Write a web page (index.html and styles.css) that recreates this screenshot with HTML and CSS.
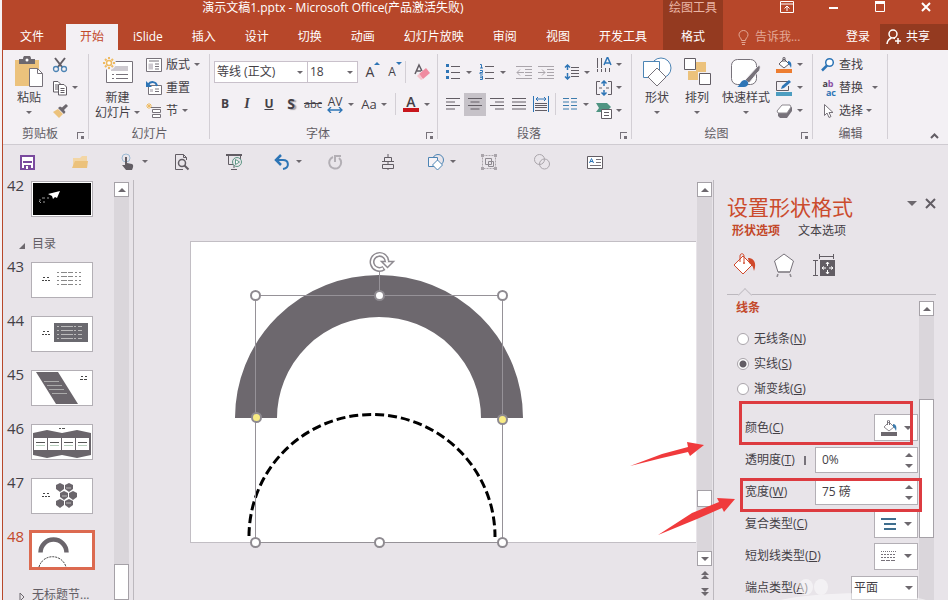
FILE: index.html
```
<!DOCTYPE html>
<html lang="zh-CN">
<head>
    <meta charset="UTF-8">
    <meta name="viewport" content="width=device-width, initial-scale=1.0">
    <title>演示文稿1.pptx</title>
    <link rel="stylesheet" href="styles.css">
</head>
<body>
<div class="app">
    <header class="header">
        <div class="title">演示文稿1.pptx - Microsoft Office(产品激活失败)</div>
        <div class="context-title">绘图工具</div>
        <div class="window-buttons">
            <button aria-label="功能区显示选项"><svg width="14" height="12" viewBox="0 0 14 12"><path d="M.5.5h13v11H.5zM.5 3h13M7 10V5M4.500 7.500 7 5l2.500 2.500" fill="none" stroke="#fff"/></svg></button>
            <button aria-label="最小化"><svg width="12" height="12" viewBox="0 0 12 12"><path d="M1 7h9" stroke="#fff" stroke-width="2"/></svg></button>
            <button aria-label="最大化"><svg width="12" height="12" viewBox="0 0 12 12"><path d="M1 1.500h10" stroke="#fff" stroke-width="3"/><path d="M1.500 1v9.500h9V1" fill="none" stroke="#fff"/></svg></button>
            <button aria-label="关闭"><svg width="12" height="12" viewBox="0 0 12 12"><path d="m2 2 8 8m0-8-8 8" stroke="#fff" stroke-width="2"/></svg></button>
        </div>
        <nav class="tabs">
            <button class="tab file">文件</button>
            <button class="tab active">开始</button>
            <button class="tab">iSlide</button>
            <button class="tab">插入</button>
            <button class="tab">设计</button>
            <button class="tab">切换</button>
            <button class="tab">动画</button>
            <button class="tab">幻灯片放映</button>
            <button class="tab">审阅</button>
            <button class="tab">视图</button>
            <button class="tab">开发工具</button>
        </nav>
        <button class="context-tab">格式</button>
        <div class="account">
            <button class="tell-me"><svg width="11" height="15" viewBox="0 0 11 15"><path d="M3.500 10.500C3.500 8 1 7.500 1 4.800a4.500 4.300 0 0 1 9 0c0 2.700-2.500 3.200-2.500 5.700zM3.500 12.500h4M4 14.500h3" fill="none" stroke="#e3a896"/></svg>告诉我...</button>
            <button class="login">登录</button>
            <button class="share"><svg width="16" height="16" viewBox="0 0 16 16"><circle cx="7" cy="5" r="4" fill="none" stroke="#fff" stroke-width="1.500"/><path d="M1 15c.3-3 2-5 4.500-6M9 9.500 7.500 9M12 9v6M9 12h6" fill="none" stroke="#fff" stroke-width="1.500"/></svg>共享</button>
        </div>
    </header>

    <section class="ribbon">
        <div class="group clipboard">
            <div class="group-body">
                <button class="big">
                    <svg width="30" height="32" viewBox="0 0 30 32"><path d="M1 4h24v26H1z" fill="#ecc27c"/><path d="M5 3h4a4 4 0 0 1 8 0h4v5H5z" fill="#6d686e"/><circle cx="13" cy="4" r="1.500" fill="#fff"/><path d="M15.500 12.500h8l5 5v13h-13z" fill="#fff" stroke="#77727a"/><path d="M23.500 12.500v5h5" fill="none" stroke="#77727a"/></svg>
                    <span>粘贴</span><i class="caret"></i>
                </button>
                <div class="stack">
                    <button aria-label="剪切"><svg width="16" height="16" viewBox="0 0 16 16"><path d="m3 1 7.500 9.500M13 1 5.500 10.500" stroke="#625d64" stroke-width="2" fill="none"/><circle cx="4" cy="12" r="2.500" fill="none" stroke="#4c84b4" stroke-width="1.300"/><circle cx="12" cy="12" r="2.500" fill="none" stroke="#4c84b4" stroke-width="1.300"/></svg></button>
                    <button aria-label="复制"><svg width="16" height="16" viewBox="0 0 16 16"><path d="M1.500 1.500H6L8.500 4v8h-7zM3 5h3M3 7h3M3 9h3" fill="#fff" stroke="#625d64"/><path d="M6.500 4.500H12L14.500 7v8h-8zM8.500 8.500h4M8.500 10.500h4M8.500 12.500h4" fill="#fff" stroke="#625d64"/></svg><i class="caret"></i></button>
                    <button aria-label="格式刷"><svg width="16" height="16" viewBox="0 0 16 16"><path d="m1 9 5-3 5 5-4 4z" fill="#ecc27c"/><path d="m6 5 6 6 1.500-2L12 7l4-4-2-2-4 3.500L8 3.500z" fill="#6d686e"/></svg></button>
                </div>
            </div>
            <footer><span>剪贴板</span><button class="launcher" aria-label="剪贴板选项"></button></footer>
        </div>

        <div class="group slides">
            <div class="group-body">
                <button class="big">
                    <svg width="30" height="32" viewBox="0 0 30 32"><path d="M3.500 5.500h26v21h-26z" fill="#fff" stroke="#77727a"/><path d="M8 10h17v5H8z" fill="#cdc9cf"/><path d="M9 18.500h2m2 0h12M9 22.500h2m2 0h12" stroke="#77727a"/><circle cx="6" cy="7" r="7" fill="#f3f0f4"/><circle cx="6" cy="7" r="2.500" fill="#fff" stroke="#eebb62" stroke-width="1.500"/><path d="M6 1v2m0 8v2M0 7h2m8 0h2M2 3l1.500 1.500m5 5L10 11m0-8L8.500 4.500m-5 5L2 11" stroke="#eebb62" stroke-width="2"/></svg>
                    <span>新建</span><span class="inline">幻灯片<i class="caret"></i></span>
                </button>
                <div class="stack">
                    <button><svg width="16" height="16" viewBox="0 0 16 16"><path d="M.5 1.500h15v13H.5zM3 4h10M9 7h4M9 9.500h4M9 12h4" fill="#fff" stroke="#77727a"/><path d="M2.500 6.500h4.500v6H2.500z" fill="#cdc9cf"/></svg>版式<i class="caret"></i></button>
                    <button><svg width="16" height="16" viewBox="0 0 16 16"><path d="M2.500 5.500h13v9h-13zM9 9h4M9 11.500h4" fill="#fff" stroke="#77727a"/><path d="M4 9h3v3H4z" fill="#cdc9cf"/><path d="M2 5c2.500-4 8-4 9 1" fill="none" stroke="#2e75b6" stroke-width="2"/><path d="M0 1v6h6z" fill="#2e75b6"/></svg>重置</button>
                    <button><svg width="16" height="16" viewBox="0 0 16 16"><path d="M5 4.500h10M6.500 6.500h8v3h-8zM6.500 11.500h8v3h-8z" fill="#fff" stroke="#77727a"/><path d="M3 0v6M0 3h6M1 1l4 4M5 1 1 5" stroke="#eebb62"/></svg>节<i class="caret"></i></button>
                </div>
            </div>
            <footer><span>幻灯片</span></footer>
        </div>

        <div class="group font">
            <div class="group-body rows">
                <div class="row">
                    <span class="combo name"><select aria-label="字体"><option>等线 (正文)</option></select><i class="caret"></i></span>
                    <span class="combo size"><select aria-label="字号"><option>18</option></select><i class="caret"></i></span>
                    <button class="tool grow" aria-label="增大字号">A<svg width="6" height="14" viewBox="0 0 6 14"><path d="m0 4 3-3 3 3z" fill="#2e75b6"/></svg></button>
                    <button class="tool shrink" aria-label="减小字号">A<svg width="6" height="14" viewBox="0 0 6 14"><path d="m0 1 3 3 3-3z" fill="#2e75b6"/></svg></button>
                    <i class="divider"></i>
                    <button class="tool eraser" aria-label="清除格式"><svg width="16" height="18" viewBox="0 0 16 18"><path d="M1 11 5 2l3 6M3 8h4" fill="none" stroke="#625d64" stroke-width="1.500"/><path d="m5 11 7-6 4 5-7 6z" fill="#f08ba0"/><path d="m3 13 2-2 4 5-2 1z" fill="#f7c3cc"/></svg></button>
                </div>
                <div class="row">
                    <button class="tool bold">B</button>
                    <button class="tool italic">I</button>
                    <button class="tool underline">U</button>
                    <button class="tool shadow">S</button>
                    <button class="tool strike">abc</button>
                    <button class="tool spacing" aria-label="字符间距"><span>AV</span><svg width="16" height="6" viewBox="0 0 16 6"><path d="M1 3h14M4 0 1 3l3 3M12 0l3 3-3 3" fill="none" stroke="#2e75b6" stroke-width="1.300"/></svg></button>
                    <i class="caret"></i>
                    <button class="tool case">Aa</button>
                    <i class="caret"></i>
                    <i class="divider"></i>
                    <button class="tool color">A</button>
                    <i class="caret"></i>
                </div>
            </div>
            <footer><span>字体</span><button class="launcher" aria-label="字体选项"></button></footer>
        </div>

        <div class="group paragraph">
            <div class="group-body">
                <div class="rows">
                    <div class="row">
                        <button class="tool" aria-label="项目符号"><svg width="16" height="16" viewBox="0 0 16 16"><path d="M1 0h3v3H1zM1 6h3v3H1zM1 12h3v3H1z" fill="#2e75b6"/><path d="M6 2.500h9M6 8.500h9M6 14.500h9" stroke="#625d64"/></svg></button><i class="caret"></i>
                        <button class="tool wide" aria-label="编号"><svg width="16" height="16" viewBox="0 0 16 16"><path d="M1 .5h1.500V4M1 4h3M1 6.500h2.500v2H1V10h3M1 12h2.500v3.500H1M1 13.700h2" fill="none" stroke="#2e75b6"/><path d="M6 2.500h9M6 8.500h9M6 14.500h9" stroke="#625d64"/></svg></button><i class="caret"></i>
                        <button class="tool first" aria-label="减少缩进"><svg width="17" height="14" viewBox="0 0 17 14"><path d="M0 1.500h16M9 4.500h7M9 7.500h7M9 10.500h7M0 13.500h16M1 7.500h7M4 4.500l-3 3 3 3" fill="none" stroke="#aaa5ab"/></svg></button>
                        <button class="tool" aria-label="增加缩进"><svg width="17" height="14" viewBox="0 0 17 14"><path d="M0 1.500h16M9 4.500h7M9 7.500h7M9 10.500h7M0 13.500h16M0 7.500h7M4 4.500l3 3-3 3" fill="none" stroke="#aaa5ab"/></svg></button>
                        <button class="tool line" aria-label="行距"><svg width="15" height="16" viewBox="0 0 15 16"><path d="M3.500 1v5M3.500 9v6M1 3.500 3.500 1 6 3.500M1 12.500 3.500 15 6 12.500" fill="none" stroke="#2e75b6" stroke-width="1.500"/><path d="M7 3.500h8M7 6.500h8M7 9.500h8M7 12.500h8" stroke="#625d64"/></svg></button><i class="caret"></i>
                    </div>
                    <div class="row">
                        <button class="tool" aria-label="左对齐"><svg width="14" height="12" viewBox="0 0 14 12"><path d="M0 .5h14M0 4h9M0 7.500h14M0 11h9" stroke="#625d64"/></svg></button>
                        <button class="tool on" aria-label="居中"><svg width="14" height="12" viewBox="0 0 14 12"><path d="M0 .5h14M2.500 4h9M0 7.500h14M2.500 11h9" stroke="#625d64"/></svg></button>
                        <button class="tool" aria-label="右对齐"><svg width="14" height="12" viewBox="0 0 14 12"><path d="M0 .5h14M5 4h9M0 7.500h14M5 11h9" stroke="#625d64"/></svg></button>
                        <button class="tool" aria-label="两端对齐"><svg width="14" height="12" viewBox="0 0 14 12"><path d="M0 .5h14M0 4h14M0 7.500h14M0 11h14" stroke="#625d64"/></svg></button>
                        <button class="tool" aria-label="分散对齐"><svg width="16" height="16" viewBox="0 0 16 16"><path d="M.5 0v16M15.500 0v16M3 3h10M5 1 3 3l2 2M11 1l2 2-2 2" fill="none" stroke="#2e75b6"/><path d="M2 7.500h12M2 9.500h12M2 11.500h12M2 14.500h12" stroke="#625d64"/></svg></button>
                        <i class="divider"></i>
                        <button class="tool" aria-label="分栏"><svg width="14" height="12" viewBox="0 0 14 12"><path d="M0 .5h6M8 .5h6M0 4h6M8 4h6M0 7.500h6M8 7.500h6M0 11h6M8 11h6" stroke="#3d7cad"/></svg></button><i class="caret"></i>
                    </div>
                </div>
                <div class="stack">
                    <button aria-label="文字方向"><svg width="16" height="16" viewBox="0 0 16 16"><path d="M1.500 1v14M5.500 1v14M9.500 11v4M13.500 11v4" stroke="#625d64" stroke-dasharray="10 1"/><path d="m8 8 3.500-8L15 8M9 6h5" fill="none" stroke="#2e75b6" stroke-width="1.500"/></svg><i class="caret"></i></button>
                    <button aria-label="对齐文本"><svg width="16" height="16" viewBox="0 0 16 16"><path d="M4 1.500H.5v13H4M12 1.500h3.500v13H12M3 8h3m4 0h3" fill="none" stroke="#625d64"/><path d="M8 1v5M8 10v5M5.500 3.500 8 1l2.500 2.500M5.500 12.500 8 15l2.500-2.500" fill="none" stroke="#2e75b6" stroke-width="1.500"/></svg><i class="caret"></i></button>
                    <button aria-label="转换为 SmartArt"><svg width="16" height="16" viewBox="0 0 16 16"><path d="M0 0h11l4 4-3 3H6v2H0l3-4z" fill="#4f9482"/><path d="M5.500 6.500h10v9h-10zM8 9.500h5M8 12.500h5" fill="#fff" stroke="#625d64"/></svg><i class="caret"></i></button>
                </div>
            </div>
            <footer><span>段落</span><button class="launcher" aria-label="段落选项"></button></footer>
        </div>

        <div class="group drawing">
            <div class="group-body">
                <button class="big">
                    <svg width="30" height="32" viewBox="0 0 30 32"><circle cx="19" cy="12" r="10" fill="#fff" stroke="#4c84b4"/><path d="M1.500 5.500h16v16h-16z" fill="#fff" stroke="#4c84b4"/><path d="m15 12 9 9-9 9-9-9z" fill="#fff" stroke="#77727a"/></svg>
                    <span>形状</span><i class="caret"></i>
                </button>
                <button class="big arrange">
                    <svg width="30" height="32" viewBox="0 0 30 32"><path d="M14 6h10v10H14zM6 15h10v9H6z" fill="#ecc27c"/><path d="M2.500 2.500h11v11h-11zM17.500 17.500h11v11h-11z" fill="#fff" stroke="#625d64"/></svg>
                    <span>排列</span><i class="caret"></i>
                </button>
                <button class="big">
                    <svg width="30" height="32" viewBox="0 0 30 32"><rect x=".5" y="3.500" width="25" height="25" rx="6" fill="#fff" stroke="#77727a"/><path d="m14 24 13-14c3-2 3 4 0 6l-9 11z" fill="#77727a" stroke="#f3f0f4"/><path d="M6 31c3-1 3-7 8-7 5 1 4 7-1 7z" fill="#2e75b6"/></svg>
                    <span>快速样式</span><i class="caret"></i>
                </button>
                <div class="stack">
                    <button aria-label="形状填充"><svg width="16" height="16" viewBox="0 0 16 16"><path d="m8 2 5 5-5 4-5-4z" fill="#fff" stroke="#625d64"/><path d="M7 5V1c0-1 2-1 2 0v4" fill="none" stroke="#625d64"/><path d="M12 4c3 0 4 3 3 7-1-2-1-3-3-4z" fill="#2e75b6"/><path d="M0 12h16v4H0z" fill="#ed7d31"/></svg><i class="caret"></i></button>
                    <button aria-label="形状轮廓"><svg width="16" height="16" viewBox="0 0 16 16"><path d="M12 1.500H.5v9h12V6" fill="none" stroke="#625d64"/><path d="m5 9 1-3 7-6 2 2-7 6z" fill="#2e75b6"/><path d="M0 12h16v4H0z" fill="#4d9dc0"/></svg><i class="caret"></i></button>
                    <button aria-label="形状效果"><svg width="16" height="16" viewBox="0 0 16 16"><path d="M2 9v4l2 2h7l5-7V4z" fill="#77727a"/><path d="M6 2h8l1 2-4 6H2L1 8z" fill="#fff" stroke="#8e8a90"/></svg><i class="caret"></i></button>
                </div>
            </div>
            <footer><span>绘图</span><button class="launcher" aria-label="绘图选项"></button></footer>
        </div>

        <div class="group editing">
            <div class="group-body">
                <div class="stack">
                    <button><svg width="16" height="16" viewBox="0 0 16 16"><circle cx="9.500" cy="5.500" r="3.800" fill="#fff" stroke="#2e75b6" stroke-width="1.500"/><path d="M7 8.500 2 13.500" stroke="#2e75b6" stroke-width="2.500"/></svg>查找</button>
                    <button class="replace"><span class="swap"><b>a<em>b</em></b><b>ac</b></span>替换<i class="caret"></i></button>
                    <button><svg width="16" height="16" viewBox="0 0 16 16"><path d="M4.500 1.500v11L7 10l2 4.500 2-1L9 9.500h4z" fill="#fff" stroke="#77727a"/></svg>选择<i class="caret"></i></button>
                </div>
            </div>
            <footer><span>编辑</span></footer>
        </div>
        <button class="collapse" aria-label="折叠功能区"><svg width="9" height="6" viewBox="0 0 9 6"><path d="m1 5 3.500-3.500L8 5" fill="none" stroke="#625d64" stroke-width="2"/></svg></button>
    </section>

    <div class="quick">
        <button aria-label="保存"><svg width="18" height="18" viewBox="0 0 18 18"><path d="M3 3h13v13H3z" fill="#fff" stroke="#7a4a9e" stroke-width="2"/><path d="M5 9h9" stroke="#7a4a9e" stroke-width="2"/><path d="M6 12h7v4H6z" fill="#7a4a9e"/><path d="M8 13h2v3H8z" fill="#fff"/></svg></button>
        <button aria-label="打开"><svg width="18" height="18" viewBox="0 0 18 18"><path d="M2 15V5h7l2-2h5v12z" fill="#f3d6a5"/><path d="m1 15 3-7h13l-1 7z" fill="#ecc27c"/></svg></button>
        <button class="split" aria-label="触摸模式"><svg width="18" height="18" viewBox="0 0 18 18"><circle cx="7" cy="5" r="4" fill="none" stroke="#9cbad4"/><path d="M6 4h2v6l5 1c2 1 1 4 0 6H7l-4-5h3z" fill="#625d64"/></svg><i class="caret"></i></button>
        <button aria-label="打印预览"><svg width="18" height="18" viewBox="0 0 18 18"><path d="M11 16.500H3.500v-15h8l3 3V7M11.500 1.500v3h3" fill="none" stroke="#625d64"/><circle cx="10" cy="10" r="3.500" fill="none" stroke="#625d64" stroke-width="1.500"/><path d="m12.500 12.500 4 4" stroke="#625d64" stroke-width="2"/></svg></button>
        <button aria-label="从头开始"><svg width="18" height="18" viewBox="0 0 18 18"><path d="M1 2h16" stroke="#625d64" stroke-width="2"/><path d="M3.500 3v8.500H8M15.500 3v3M9 12v3M6 16.500h6" fill="none" stroke="#625d64"/><circle cx="12" cy="9" r="4.500" fill="#e9e5ea" stroke="#5e9785"/><path d="m10.500 6.500 4 2.500-4 2.500z" fill="#fff" stroke="#5e9785"/></svg></button>
        <button class="split" aria-label="撤消"><svg width="18" height="18" viewBox="0 0 18 18"><path d="M3 7h7c6 0 7 8 0 9" fill="none" stroke="#2e75b6" stroke-width="2"/><path d="M8 2 3 7l5 5" fill="none" stroke="#2e75b6" stroke-width="2.500"/></svg><i class="caret"></i></button>
        <button aria-label="重复"><svg width="18" height="18" viewBox="0 0 18 18"><path d="M7 4a6 6 0 1 0 6 1" fill="none" stroke="#b3afb5" stroke-width="2"/><path d="M9 9V3h6" fill="none" stroke="#b3afb5" stroke-width="2"/></svg></button>
        <button aria-label="对齐"><svg width="18" height="18" viewBox="0 0 18 18"><path d="M9 1v3M5.500 4.500h7v4h-7zM9 8.500v3M3.500 11.500h11v4h-11zM9 15v2M3 8.500h12" fill="none" stroke="#625d64"/></svg></button>
        <button class="split" aria-label="形状"><svg width="18" height="18" viewBox="0 0 18 18"><circle cx="11" cy="7" r="5.500" fill="none" stroke="#4c84b4"/><path d="M1.500 4.500h9v9h-9z" fill="#f6f3f7" stroke="#4c84b4"/><path d="m10.500 7 5 5-5 5-5-5z" fill="#fff" stroke="#4c84b4"/></svg><i class="caret"></i></button>
        <button aria-label="组合"><svg width="18" height="18" viewBox="0 0 18 18"><path d="M2.500 2.500h13v13h-13z" fill="none" stroke="#aaa5ab" stroke-dasharray="2 1"/><path d="M5.500 5.500h6v6h-6zM8.500 8.500h5v5h-5z" fill="none" stroke="#8e8a90"/><path d="M1 1h3v3H1zM14 1h3v3h-3zM1 14h3v3H1zM14 14h3v3h-3z" fill="#aaa5ab"/></svg></button>
        <button aria-label="合并形状"><svg width="18" height="18" viewBox="0 0 18 18"><circle cx="6.500" cy="6.500" r="5" fill="none" stroke="#aaa5ab"/><circle cx="11.500" cy="11" r="5" fill="none" stroke="#aaa5ab"/></svg></button>
        <button aria-label="文本框"><svg width="18" height="18" viewBox="0 0 18 18"><path d="M1.500 3.500h15v12h-15z" fill="#fff" stroke="#625d64"/><path d="m3.500 10 2-4.500 2 4.500M4 8.500h3" fill="none" stroke="#2e75b6"/><path d="M10 6.500h5M10 9.500h5M4 12.500h11" stroke="#77727a"/></svg></button>
    </div>

    <main class="workspace">
        <aside class="thumbs">
            <ol>
                <li><span>42</span><svg class="thumb" viewBox="0 0 60 34"><path d="M1 1h58v32H1z"/><path d="m28 9-12 3 4 2 1 3 2-2 2 1z" fill="#fff"/><path d="M7 18h2m1-2h3m-2 4h2m-6-1 2 2m8-5h-2" stroke="#999"/></svg></li>
                <li class="section"><svg width="8" height="8" viewBox="0 0 8 8"><path d="M7 1v6H1z" fill="#6d686e"/></svg>目录</li>
                <li><span>43</span><svg class="thumb" viewBox="0 0 60 34"><path d="M0 0h60v34H0z" fill="#fff"/><path d="M11 14.500h2m2 0h2M10 17.500h8" stroke="#444" stroke-dasharray="2 1"/><path d="M25 9.500h24M25 13.500h24M25 17.500h24M25 21.500h24" stroke="#888" stroke-dasharray="2 2 6 1 5 2"/></svg></li>
                <li><span>44</span><svg class="thumb" viewBox="0 0 60 34"><path d="M0 0h60v34H0z" fill="#fff"/><path d="M22 6h34v19H22z" fill="#6a696f"/><path d="M11 14.500h2m2 0h2M10 17.500h8" stroke="#444" stroke-dasharray="2 1"/><path d="M25 9.500h25M25 13.500h25M25 17.500h25M25 21.500h25" stroke="#bbb" stroke-dasharray="2 2 12 1"/></svg></li>
                <li><span>45</span><svg class="thumb" viewBox="0 0 60 34"><path d="M0 0h60v34H0z" fill="#fff"/><path d="M4 1h22l20 32H24z" fill="#6a656b"/><path d="M12 10.500h15M15 14.500h15M17 18.500h15M20 22.500h15" stroke="#aaa"/><path d="M49 5.500h2m2 0h2M48 8.500h8" stroke="#444" stroke-dasharray="3 1"/></svg></li>
                <li><span>46</span><svg class="thumb" viewBox="0 0 60 34"><path d="M0 0h60v34H0z" fill="#fff"/><path d="m1 8 14-3 15 3 15-3 14 3v22l-14 3-15-3-15 3-14-3z" fill="#6a656b"/><path d="M2 13h13v12H2zM16 13h13v12H16zM30 13h13v12H30zM44 13h13v12H44z" fill="#fff"/><path d="M4 17.500h9m5 0h9m5 0h9m5 0h9M27 3.500h2m1 0h3" stroke="#555"/><path d="M4 20.500h9m5 0h9m5 0h9m5 0h9" stroke="#b5cdbb"/></svg></li>
                <li><span>47</span><svg class="thumb" viewBox="0 0 60 34"><path d="M0 0h60v34H0z" fill="#fff"/><path d="M11 14.500h2m2 0h2M10 17.500h8" stroke="#444" stroke-dasharray="2 1"/><path id="hex" d="m28 4 4 2v4l-4 3-4-3V6z" fill="#6a656b"/><use href="#hex" x="9"/><use href="#hex" x="4" y="8"/><use href="#hex" x="13" y="8"/><use href="#hex" y="16"/><use href="#hex" x="9" y="16"/><path d="M34 9h5M30 17h5M34 24h5" stroke="#bbb"/></svg></li>
                <li class="selected"><span>48</span><svg class="thumb" viewBox="0 0 60 34"><path d="M0 0h60v34H0z" fill="#fff"/><path d="M8.500 19.500a13 13 0 0 1 26 0" fill="none" stroke="#6a656b" stroke-width="4.500"/><path d="M7 34a14 14 0 0 1 27 0" fill="none" stroke="#333" stroke-dasharray="2 1"/></svg></li>
                <li class="section"><svg width="8" height="8" viewBox="0 0 8 8"><path d="m2 0 4 4-4 4z" fill="none" stroke="#6d686e"/></svg>无标题节...</li>
            </ol>
            <div class="scroll list-scroll">
                <button aria-label="向上滚动"><i class="up"></i></button>
                <div class="track"><div class="handle"></div></div>
            </div>
        </aside>

        <section class="editor">
            <div class="slide">
                <svg class="drawing-area" width="506" height="302" viewBox="0 0 506 302">
                    <path d="M66 177A123 122 0 0 1 312 177" fill="none" stroke="#6d686e" stroke-width="42"/>
                    <path d="M59 295A123 122 0 0 1 305 296" fill="none" stroke="#000" stroke-width="3" stroke-dasharray="9 4"/>
                    <path d="M65.500 54.500h247v247h-247zM189.500 31v19" fill="none" stroke="#969298"/>
                    <g fill="#fff" stroke="#8e8a90" stroke-width="2">
                        <circle cx="65.500" cy="54.500" r="4.500"/>
                        <circle cx="189.500" cy="54.500" r="4.500"/>
                        <circle cx="312.500" cy="54.500" r="4.500"/>
                        <circle cx="65.500" cy="301.500" r="4.500"/>
                        <circle cx="189.500" cy="301.500" r="4.500"/>
                        <circle cx="312.500" cy="301.500" r="4.500"/>
                        <circle cx="66.500" cy="176.500" r="4.500" fill="#f9ec84"/>
                        <circle cx="312.500" cy="178.500" r="4.500" fill="#f9ec84"/>
                    </g>
                    <!-- rotation handle -->
                    <path d="M194 27a7.500 7.500 0 1 1 3-7" fill="none" stroke="#8e8a90" stroke-width="5"/>
                    <path d="M191.500 20.500h12l-6 6z" fill="#fff" stroke="#8e8a90" stroke-width="1.500"/>
                    <path d="M193 27.500a7.500 7.500 0 1 1 4-6" fill="none" stroke="#fff" stroke-width="2"/>
                </svg>
            </div>
        </section>
        <div class="scroll editor-scroll">
            <button aria-label="向上滚动"><i class="up"></i></button>
            <div class="track"><div class="handle"></div></div>
            <button aria-label="向下滚动"><i class="down"></i></button>
            <button class="page" aria-label="上一张幻灯片"><i class="up"></i><i class="up"></i></button>
            <button class="page" aria-label="下一张幻灯片"><i class="down"></i><i class="down"></i></button>
        </div>

        <aside class="pane">
            <div class="pane-head">
                <h2>设置形状格式</h2>
                <button aria-label="任务窗格选项"><i class="down"></i></button>
                <button aria-label="关闭窗格"><svg width="11" height="11" viewBox="0 0 11 11"><path d="m1 1 9 9m0-9-9 9" stroke="#625d64" stroke-width="2"/></svg></button>
            </div>
            <div class="pane-tabs">
                <button class="active">形状选项</button>
                <button>文本选项</button>
            </div>
            <div class="pane-icons">
                <button class="active" aria-label="填充与线条"><svg width="24" height="24" viewBox="0 0 24 24"><path d="m11 3 9 9-9 9-9-9z" fill="#fff" stroke="#d0492c"/><path d="M8 9V3c0-3 4-3 4 0v6" fill="none" stroke="#d0492c"/><circle cx="12" cy="10" r="1" fill="#d0492c"/><path d="M16 5c6 0 9 5 6 13-1-5-2-6-5-8z" fill="#d0492c"/></svg></button>
                <button aria-label="效果"><svg width="24" height="24" viewBox="0 0 24 24"><path d="m12 1 9.500 7L18 19H6L2.500 8z" fill="#fff" stroke="#77727a"/><path d="M6 19h12M6 21l-1 3M18 21l1 3" stroke="#8e8a90" stroke-width="1.500"/></svg></button>
                <button aria-label="大小与属性"><svg width="24" height="24" viewBox="0 0 24 24"><path d="M7.500 3.500h14M7.500 1v5M21.500 1v5M3.500 8v14M1 7.500h5M1 22.500h5" stroke="#625d64"/><path d="M8 7h15v16H8z" fill="#625d64"/><path d="M15.500 9v4m0 4v4M10 15h4m3 0h4M14 11l1.500-2 1.500 2m-3 8 1.500 2 1.500-2m-5-5.500L10 15l2 1.500m7-3 2 1.500-2 1.500" fill="none" stroke="#fff"/></svg></button>
            </div>
            <div class="pane-body">
                <form class="options">
                    <h3>线条</h3>
                    <label class="radio"><input type="radio" name="line">无线条(<u>N</u>)</label>
                    <label class="radio"><input type="radio" name="line" checked>实线(<u>S</u>)</label>
                    <label class="radio"><input type="radio" name="line">渐变线(<u>G</u>)</label>
                    <div class="field mark-color">
                        <label for="color">颜色(<u>C</u>)</label>
                        <button type="button" id="color" class="picker"><svg width="18" height="16" viewBox="0 0 18 16"><path d="m9 2 5 5-5 4-5-4z" fill="#fff" stroke="#8e8a90"/><path d="M7.500 5V1c0-1 2-1 2 0v4" fill="none" stroke="#77727a"/><path d="M13 4c3 0 4 3 3 7-1-2-1-3-3-4z" fill="#3d7cad"/><path d="M1 12h16v4H1z" fill="#6d686e"/></svg><i class="down"></i></button>
                    </div>
                    <div class="field">
                        <label for="alpha">透明度(<u>T</u>)</label><i class="slider"></i>
                        <span class="spin"><input type="text" id="alpha" value="0%"><span><i class="up"></i><i class="down"></i></span></span>
                    </div>
                    <div class="field mark-width">
                        <label for="width">宽度(<u>W</u>)</label>
                        <span class="spin"><input type="text" id="width" value="75 磅"><span><i class="up"></i><i class="down"></i></span></span>
                    </div>
                    <div class="field">
                        <label for="compound">复合类型(<u>C</u>)</label>
                        <button type="button" id="compound" class="picker"><svg width="18" height="14" viewBox="0 0 18 14"><path d="M1 2h15M4 7h12M4 12h12" stroke="#3f6e8e" stroke-width="2"/></svg><i class="down"></i></button>
                    </div>
                    <div class="field">
                        <label for="dash">短划线类型(<u>D</u>)</label>
                        <button type="button" id="dash" class="picker"><svg width="18" height="14" viewBox="0 0 18 14"><path d="M1 2.500h15" stroke="#77727a" stroke-dasharray="1 1"/><path d="M1 5.500h15M1 8.500h15" stroke="#77727a" stroke-dasharray="2 1"/><path d="M1 11.500h15" stroke="#77727a" stroke-dasharray="4 1"/></svg><i class="down"></i></button>
                    </div>
                    <div class="field">
                        <label for="cap">端点类型(<u>A</u>)</label>
                        <span class="drop"><select id="cap"><option>平面</option></select><i class="down"></i></span>
                    </div>
                </form>
                <div class="scroll pane-scroll">
                    <button aria-label="向上滚动"><i class="up"></i></button>
                    <div class="track"><div class="handle"></div></div>
                </div>
            </div>
            <svg class="watermark" width="150" height="24" viewBox="0 0 150 24"><ellipse cx="26" cy="11" rx="7" ry="8"/><ellipse cx="41" cy="11" rx="7" ry="8"/><path d="M0 24c40-9 120-9 146 0z"/></svg>
            <!-- callout arrows pointing at the two marked fields -->
            <svg class="callouts" width="108" height="98" viewBox="0 0 108 98"><path d="M0 26 32 14 58 7l-1-5 17 3-14 11-2-4-26 6zM28 95l34-22 27-11-2-4 18 1-11 13-2-4-25 11z"/></svg>
        </aside>
    </main>
</div>
</body>
</html>
```
FILE: styles.css
```
* {
    box-sizing: border-box;
}
body {
    margin: 0;
    background: #f6f1f3;
    color: #444046;
    font-family: "Open Sans", "Noto Sans CJK SC", sans-serif;
    font-size: 12px;
    line-height: 16px;
}
button, select, input {
    font: inherit;
    color: inherit;
}
button {
    display: flex;
    align-items: center;
    justify-content: center;
    padding: 0;
    border: none;
    background: transparent;
    white-space: nowrap;
}
svg {
    flex: none;
}
.app {
    display: flex;
    flex-direction: column;
    height: 100vh;
    margin-left: 2px;
    border-left: 1px solid #b7472a;
    overflow: hidden;
}
.caret, .up, .down {
    flex: none;
    width: 0;
    height: 0;
    border: 3px solid transparent;
    border-top-color: #6d686e;
    border-bottom: none;
}
.up, .down {
    border-width: 4px;
}
.down {
    border-bottom: none;
}
.up {
    border-top: none;
    border-bottom: 4px solid #6d686e;
}

/* title bar and tabs */
.header {
    display: grid;
    grid-template-columns: auto 60px 1fr;
    grid-template-rows: 24px 26px;
    flex: none;
    background: #b7472a;
    color: #fff;
}
.title {
    text-align: center;
    line-height: 16px;
}
.context-title, .context-tab {
    background: #943a20;
    text-align: center;
}
.context-title {
    color: #eab5a5;
}
.window-buttons {
    display: flex;
    justify-content: flex-end;
    align-items: flex-start;
    gap: 34px;
    padding: 1px 16px 0 0;
}
.tabs {
    display: flex;
    gap: 1px;
    padding-left: 3px;
    padding-right: 2px;
}
.tab {
    padding: 0 14px;
}
.tab.file {
    padding-right: 21px;
}
.tab.active {
    background: #f3f0f4;
    color: #c3482a;
}
.account {
    display: flex;
    align-items: center;
}
.tell-me {
    gap: 6px;
    margin-left: 15px;
    margin-right: auto;
    color: #e3a896;
}
.share {
    gap: 4px;
    height: 26px;
    margin-left: 10px;
    padding: 0 18px 0 6px;
    background: #943a20;
}

/* ribbon */
.ribbon {
    display: flex;
    flex: none;
    height: 95px;
    background: #f3f0f4;
    border-bottom: 1px solid #cfcbd1;
}
.group {
    display: flex;
    flex-direction: column;
    position: relative;
}
.group::after {
    content: "";
    position: absolute;
    right: 0;
    top: 4px;
    bottom: 5px;
    width: 1px;
    background: #d3cfd5;
}
.group-body {
    display: flex;
    height: 74px;
    padding-top: 3px;
}
.group footer {
    display: flex;
    align-items: center;
    height: 19px;
    color: #625d64;
}
.group footer span {
    flex: 1;
    text-align: center;
}
.launcher {
    width: 7px;
    height: 7px;
    margin: 4px 5px 0 0;
    border-left: 1px solid #77727a;
    border-top: 1px solid #77727a;
    background: linear-gradient(#77727a, #77727a) right bottom / 3px 3px no-repeat;
}
.big {
    flex-direction: column;
    justify-content: flex-start;
    padding-top: 3px;
}
.big span {
    line-height: 15px;
}
.big svg + span {
    margin-top: 2px;
}
.big > .caret {
    margin-top: 6px;
}
.inline {
    display: flex;
    align-items: center;
    gap: 3px;
}
.stack {
    display: flex;
    flex-direction: column;
}
.stack button {
    justify-content: flex-start;
    gap: 4px;
    height: 23px;
}
.row {
    display: flex;
    align-items: center;
    height: 24px;
}
.rows {
    padding-top: 7px;
}
.rows .row + .row {
    margin-top: 8px;
}
.group-body.rows {
    display: block;
    padding-top: 10px;
}
.tool {
    width: 22px;
    height: 23px;
}
.divider {
    width: 1px;
    height: 22px;
    background: #d3cfd5;
}
.clipboard {
    width: 86px;
}
.clipboard .group-body {
    gap: 8px;
    padding-left: 11px;
}
.slides {
    width: 121px;
}
.slides .group-body {
    gap: 6px;
    padding-left: 6px;
}
.font {
    width: 228px;
}
.font .group-body {
    padding-left: 4px;
}
.combo, .drop {
    display: flex;
    align-items: center;
    height: 22px;
    padding-right: 4px;
    border: 1px solid #c9c1cb;
    background: #fff;
}
.combo select, .drop select {
    flex: 1;
    min-width: 0;
    padding: 0 2px;
    border: none;
    background: transparent;
    appearance: none;
}
.combo.name {
    width: 94px;
}
.combo.size {
    width: 51px;
    margin-left: -1px;
}
.grow {
    width: 24px;
    margin-left: 3px;
    font-size: 14px;
}
.shrink {
    width: 20px;
}
.grow svg, .shrink svg {
    align-self: flex-start;
}
.eraser {
    margin-left: 5px;
}
.bold, .underline, .shadow {
    font-weight: bold;
}
.italic {
    font-family: "Liberation Serif", serif;
    font-size: 14px;
    font-style: italic;
    font-weight: bold;
}
.underline {
    text-decoration: underline;
}
.shadow {
    font-size: 14px;
    text-shadow: 2px 1px 1px #a5a1a7;
}
.strike {
    font-size: 11px;
    text-decoration: line-through;
}
.spacing {
    flex-direction: column;
}
.spacing span {
    line-height: 11px;
}
.spacing + .caret {
    margin-left: 2px;
}
.case {
    width: 24px;
    margin-left: 3px;
    font-size: 13px;
}
.case + .caret {
    margin-right: 8px;
}
.color {
    width: 16px;
    height: 16px;
    margin: 0 5px 0 7px;
    border-bottom: 4px solid #c8161c;
    font-size: 14px;
    font-weight: 600;
    line-height: 12px;
}
.paragraph {
    width: 194px;
}
.paragraph .group-body {
    gap: 6px;
    padding-left: 4px;
}
.paragraph .row .tool + .caret {
    margin-left: 2px;
}
.paragraph .wide {
    margin-left: 4px;
}
.paragraph .first {
    margin-left: 7px;
}
.paragraph .line {
    margin-left: 3px;
}
.paragraph .on {
    background: #c6c2c8;
}
.paragraph .divider {
    margin: 0 3px;
}
.drawing {
    width: 181px;
}
.drawing .group-body {
    padding-left: 10px;
}
.drawing .big + .big {
    margin-left: 10px;
}
.drawing .stack {
    margin-left: 6px;
}
.drawing .stack button {
    gap: 5px;
}
.editing {
    width: 75px;
}
.editing .group-body {
    padding-left: 7px;
}
.editing .stack button {
    gap: 3px;
}
.swap {
    display: flex;
    flex-direction: column;
    width: 16px;
    font-size: 9px;
    line-height: 9px;
}
.swap b + b {
    align-self: flex-end;
    color: #2e75b6;
}
.swap em {
    color: #8a4fa3;
    font-style: normal;
}
.replace .caret {
    margin-left: 6px;
}
.collapse {
    align-self: flex-end;
    margin: 0 9px 5px auto;
}

/* quick access */
.quick {
    display: flex;
    flex: none;
    align-items: center;
    gap: 35px;
    height: 35px;
    padding-left: 15px;
    padding-bottom: 2px;
    background: #e9e5ea;
}
.quick .split {
    gap: 5px;
    margin-left: -5px;
    margin-right: -11px;
}

/* workspace */
.workspace {
    display: flex;
    flex: 1;
    min-height: 0;
    background: #e8e4e9;
}
.thumbs {
    display: flex;
    flex: none;
    width: 131px;
    border-right: 1px solid #bcb8be;
}
.thumbs ol {
    flex: 1;
    margin: 0;
    padding: 0;
    list-style: none;
}
.thumbs li {
    display: flex;
    align-items: flex-start;
    height: 54px;
    padding-left: 4px;
    padding-top: 1px;
    white-space: nowrap;
}
.thumbs li span {
    width: 24px;
    font-size: 15px;
    line-height: 8px;
}
.thumbs .section {
    align-items: center;
    gap: 6px;
    height: 27px;
    padding-left: 15px;
    padding-bottom: 8px;
    color: #625d64;
}
.thumbs .section svg {
    margin-top: 4px;
}
.thumb {
    width: 62px;
    height: 36px;
    border: 1px solid #b3afb5;
    background: #fff;
}
.thumbs .selected span {
    color: #c3482a;
}
.selected .thumb {
    width: 66px;
    height: 40px;
    margin-left: -2px;
    margin-top: -2px;
    border: 3px solid #dc6a50;
}
.scroll {
    display: flex;
    flex-direction: column;
    flex: none;
    width: 15px;
    background: #dad6db;
}
.scroll button {
    height: 15px;
    border: 1px solid #a5a1a7;
    background: #fff;
}
.track {
    display: flex;
    flex-direction: column;
    flex: 1;
}
.track::before {
    content: "";
}
.handle {
    border: 1px solid #a5a1a7;
    background: #fff;
}
.list-scroll {
    margin: 2px 4px 0 0;
}
.list-scroll .track::before {
    flex: 370;
}
.list-scroll .handle {
    flex: 34;
}
.editor {
    flex: 1;
    min-width: 0;
    padding-top: 61px;
    padding-left: 56px;
}
.slide {
    height: 302px;
    border: 1px solid #c2bec4;
    border-right: none;
    background: #fff;
}
.drawing-area {
    display: block;
    margin: -1px;
    overflow: visible;
}
.editor-scroll {
    margin-top: 2px;
    margin-left: 1px;
}
.editor-scroll .track::before {
    flex: 296;
}
.editor-scroll .handle {
    flex: 15;
}
.editor-scroll .track::after {
    content: "";
    flex: 45;
}
.editor-scroll .page {
    flex-direction: column;
    height: 17px;
    border: none;
    background: #e8e4e9;
}

/* format pane */
.pane {
    position: relative;
    flex: none;
    display: flex;
    flex-direction: column;
    width: 235px;
    margin-left: 1px;
    padding: 11px 12px 0 13px;
    border-left: 1px solid #bcb8be;
}
.pane-head {
    display: flex;
    align-items: center;
    gap: 8px;
    height: 32px;
}
.pane-head h2 {
    flex: 1;
    margin: 0;
    color: #cb4b2d;
    font-size: 21px;
    font-weight: 400;
    line-height: 30px;
}
.pane-head button {
    padding-bottom: 8px;
}
.pane-head .down {
    border-width: 5px;
    border-bottom: none;
}
.pane-tabs {
    display: flex;
    gap: 18px;
    padding-left: 5px;
}
.pane-tabs .active {
    color: #c3482a;
    font-weight: bold;
}
.pane-icons {
    display: flex;
    gap: 16px;
    height: 56px;
    padding: 14px 0 0 5px;
    border-bottom: 1px solid #bcb8be;
}
.pane-icons button {
    position: relative;
    height: 24px;
}
.pane-icons .active::after {
    content: "";
    position: absolute;
    left: 8px;
    top: 37px;
    width: 9px;
    height: 9px;
    border: 1px solid #c6c2c8;
    border-right: none;
    border-bottom: none;
    background: #e8e4e9;
    transform: rotate(45deg);
}
.pane-body {
    display: flex;
    flex: 1;
    gap: 1px;
    min-height: 0;
    margin-right: 2px;
}
.options {
    flex: 1;
    min-width: 0;
}
.options h3 {
    margin: 5px 0 10px;
    padding-left: 9px;
    color: #c3482a;
    font-size: 12px;
    line-height: 16px;
}
.radio {
    display: flex;
    align-items: center;
    height: 25px;
    padding-left: 10px;
}
.radio input {
    width: 12px;
    height: 12px;
    margin: 0 5px 0 0;
    border: 1px solid #aaa5ab;
    border-radius: 50%;
    background: #fff;
    appearance: none;
}
.radio input:checked {
    background: radial-gradient(#625d64 3px, #fff 4px);
}
.field {
    position: relative;
    display: flex;
    align-items: center;
    justify-content: space-between;
    height: 32px;
    padding-left: 18px;
    white-space: nowrap;
}
.mark-color {
    height: 33px;
    margin-top: 10px;
}
.mark-color::after, .mark-width::after {
    content: "";
    position: absolute;
    border: 3px solid #dd3b40;
    pointer-events: none;
    z-index: 1;
}
.mark-color::after {
    inset: -10px 5px -1px 12px;
}
.mark-width::after {
    inset: 2px -4px -4px 13px;
}
.slider {
    width: 2px;
    height: 9px;
    margin: 0 auto;
    background: #77727a;
}
.picker, .spin, .drop {
    border: 1px solid #b3afb5;
    background: #fff;
}
.picker {
    gap: 6px;
    width: 44px;
    height: 27px;
}
.spin {
    display: flex;
    align-items: center;
    width: 103px;
    height: 26px;
    padding-right: 4px;
}
.spin input {
    flex: 1;
    min-width: 0;
    padding: 0 6px;
    border: none;
    background: transparent;
}
.spin > span {
    display: flex;
    flex-direction: column;
    gap: 7px;
}
.drop {
    width: 67px;
    height: 24px;
}
.pane-scroll {
    margin-top: 6px;
}
.pane-scroll .track::before {
    flex: 84;
}
.pane-scroll .handle {
    flex: 138;
}
.pane-scroll .track::after {
    content: "";
    flex: 62;
}
.watermark {
    position: absolute;
    left: 66px;
    bottom: 0;
    fill: #fff;
    opacity: 0.5;
}
.callouts {
    position: absolute;
    left: -84px;
    top: 260px;
    fill: #f03a3c;
}
```
